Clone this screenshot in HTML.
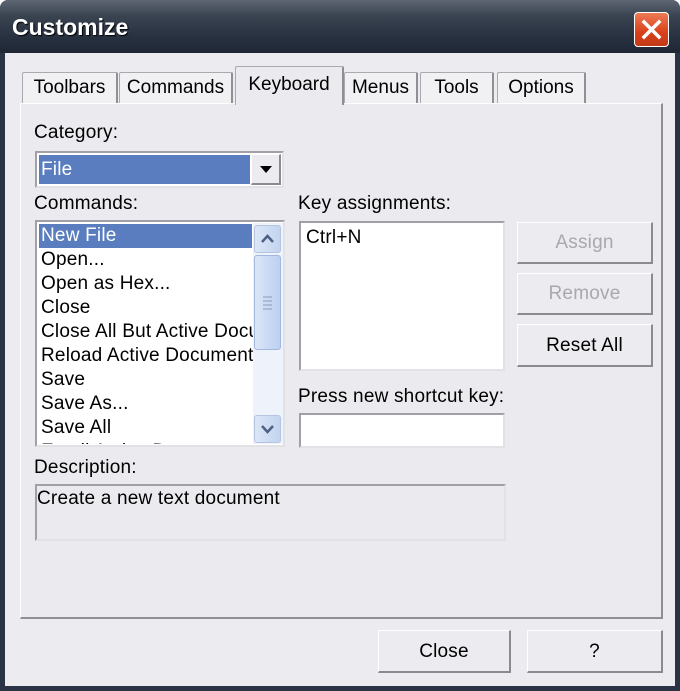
<!DOCTYPE html>
<html><head><meta charset="utf-8"><style>
*{box-sizing:border-box;margin:0;padding:0}
body{width:680px;height:691px;overflow:hidden;background:#fff;font-family:"Liberation Sans",sans-serif;font-size:19px;letter-spacing:0.2px;color:#000;position:relative}
.a{position:absolute}
.frame{left:0;top:0;width:680px;height:691px;background:#2b3444;border-radius:8px 8px 0 0}
.title{left:0;top:0;width:680px;height:53px;border-radius:8px 8px 0 0;background:linear-gradient(#5d6672 0%,#3a4350 30%,#283140 70%,#1f2735 100%)}
.ttext{left:12px;top:14px;color:#fff;font-weight:bold;font-size:23px;letter-spacing:0;text-shadow:1px 1px 1px #000}
.xbtn{left:634px;top:12px;width:35px;height:35px;border:1px solid #fff;border-radius:4px;background:linear-gradient(#ee7a55,#d8401a 60%,#c23a18)}
.body{left:5px;top:53px;width:670px;height:633px;background:#ecebef}
.tab{top:72px;height:32px;background:#f1f0f3;border:1px solid #a9a9b0;border-bottom:none;border-right:2px solid #8f8f96;text-align:center;line-height:30px;border-radius:2px 2px 0 0;letter-spacing:0}
.panel{left:20px;top:103px;width:643px;height:516px;background:#ebeaee;border:1px solid #fff;border-right:2px solid #8f8f96;border-bottom:2px solid #8f8f96}
.sunk{border:2px solid #a0a0a6;border-right-color:#e2e2e6;border-bottom-color:#e2e2e6;background:#fff}
.btn{background:#ecebef;border:1px solid #fff;border-right:2px solid #8a8a90;border-bottom:2px solid #8a8a90;text-align:center}
.row{left:41px;height:24px;line-height:24px;white-space:nowrap}
</style></head><body>
<div class="a frame"></div>
<div class="a title"></div>
<div class="a ttext">Customize</div>
<div class="a xbtn"><svg width="33" height="33" viewBox="0 0 33 33"><path d="M9 9L24 24M24 9L9 24" stroke="#fff" stroke-width="3.5" stroke-linecap="square"/></svg></div>
<div class="a body"></div>

<div class="a tab" style="left:22px;width:96px">Toolbars</div>
<div class="a tab" style="left:119px;width:114px">Commands</div>
<div class="a tab" style="left:497px;width:89px">Options</div>
<div class="a tab" style="left:420px;width:74px">Tools</div>
<div class="a tab" style="left:344px;width:74px">Menus</div>
<div class="a panel"></div>
<div class="a tab" style="left:235px;top:66px;height:39px;width:109px;background:#ebeaee;border-bottom:none;line-height:36px;z-index:2">Keyboard</div>

<div class="a" style="left:34px;top:122px">Category:</div>
<div class="a sunk" style="left:35px;top:151px;width:249px;height:37px"></div>
<div class="a" style="left:39px;top:155px;width:211px;height:29px;background:#5a7dbf;color:#fff;line-height:29px;padding-left:2px">File</div>
<div class="a btn" style="left:251px;top:154px;width:30px;height:31px"><svg width="28" height="28" viewBox="0 0 28 28"><path d="M8 11L20 11L14 18Z" fill="#000"/></svg></div>

<div class="a" style="left:34px;top:193px">Commands:</div>
<div class="a sunk" style="left:35px;top:220px;width:250px;height:227px;overflow:hidden"></div>
<div class="a" style="left:39px;top:224px;width:213px;height:24px;background:#5a7dbf"></div>
<div class="a" style="left:37px;top:224px;width:216px;height:220px;overflow:hidden">
<div class="a row" style="left:4px;top:0;color:#fff">New File</div>
<div class="a row" style="left:4px;top:24px">Open...</div>
<div class="a row" style="left:4px;top:48px">Open as Hex...</div>
<div class="a row" style="left:4px;top:72px">Close</div>
<div class="a row" style="left:4px;top:96px">Close All But Active Document</div>
<div class="a row" style="left:4px;top:120px">Reload Active Document</div>
<div class="a row" style="left:4px;top:144px">Save</div>
<div class="a row" style="left:4px;top:168px">Save As...</div>
<div class="a row" style="left:4px;top:192px">Save All</div>
<div class="a row" style="left:4px;top:216px">Email Active Document</div>
</div>
<div class="a" style="left:253px;top:223px;width:30px;height:221px;background:#eef3fb"></div>
<div class="a" style="left:254px;top:225px;width:27px;height:28px;border:1px solid #b5c4df;border-radius:3px;background:linear-gradient(90deg,#dbe6f7,#c3d4f0)"><svg width="25" height="26" viewBox="0 0 25 26"><path d="M7 16L12.5 10L18 16" stroke="#4d6185" stroke-width="2.5" fill="none"/></svg></div>
<div class="a" style="left:254px;top:255px;width:27px;height:95px;border:1px solid #a3b7dd;border-radius:3px;background:linear-gradient(90deg,#dbe6f7,#bcd0f1)"><svg width="25" height="93" viewBox="0 0 25 93"><path d="M8 41H17M8 45H17M8 49H17M8 53H17" stroke="#8a9bbd" stroke-width="1"/></svg></div>
<div class="a" style="left:254px;top:415px;width:27px;height:28px;border:1px solid #b5c4df;border-radius:3px;background:linear-gradient(90deg,#dbe6f7,#c3d4f0)"><svg width="25" height="26" viewBox="0 0 25 26"><path d="M7 10L12.5 16L18 10" stroke="#4d6185" stroke-width="2.5" fill="none"/></svg></div>

<div class="a" style="left:298px;top:193px">Key assignments:</div>
<div class="a sunk" style="left:299px;top:221px;width:206px;height:150px"></div>
<div class="a" style="left:306px;top:227px">Ctrl+N</div>

<div class="a btn" style="left:517px;top:222px;width:136px;height:42px;line-height:40px;color:#a8a8ae">Assign</div>
<div class="a btn" style="left:517px;top:273px;width:136px;height:42px;line-height:40px;color:#a8a8ae">Remove</div>
<div class="a btn" style="left:517px;top:324px;width:136px;height:43px;line-height:41px">Reset All</div>

<div class="a" style="left:298px;top:386px">Press new shortcut key:</div>
<div class="a sunk" style="left:299px;top:413px;width:206px;height:35px"></div>

<div class="a" style="left:34px;top:457px">Description:</div>
<div class="a sunk" style="left:35px;top:484px;width:471px;height:57px;background:#ebeaee"></div>
<div class="a" style="left:37px;top:488px">Create a new text document</div>

<div class="a btn" style="left:378px;top:630px;width:133px;height:43px;line-height:41px">Close</div>
<div class="a btn" style="left:527px;top:630px;width:136px;height:43px;line-height:41px">?</div>
</body></html>
